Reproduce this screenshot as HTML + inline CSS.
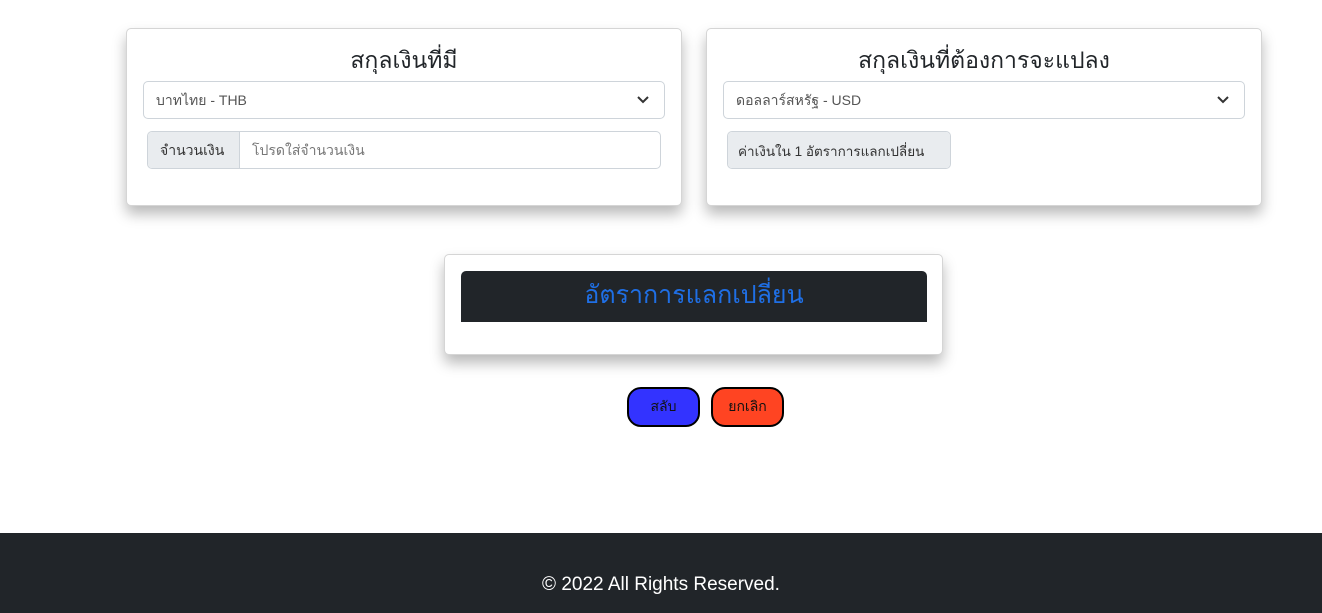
<!DOCTYPE html>
<html><head><meta charset="utf-8"><style>
*{box-sizing:border-box;margin:0;padding:0}
body{width:1322px;height:613px;background:#fff;font-family:"Liberation Sans","DejaVu Sans",sans-serif;color:#212529;position:relative;overflow:hidden}
.card{position:absolute;background:#fff;border:1px solid #d5d5d5;border-radius:5px;box-shadow:0 8px 14px rgba(0,0,0,.28)}
.t{position:absolute;left:0;right:0;text-align:center;font-size:23px}
.sel{position:absolute;height:38px;border:1px solid #ced4da;border-radius:5px;font-size:14px;color:#555;padding:8px 12px;white-space:nowrap}
.sel svg{position:absolute;right:14px;top:13px}
.grp{position:absolute;height:38px;border:1px solid #ced4da;border-radius:5px;font-size:14px;display:flex;overflow:hidden;white-space:nowrap}
.addon{background:#e9ecef;padding:8px 12px;border-right:1px solid #ced4da;color:#333}
.ph{padding:8px 12px;color:#777}
.btn{position:absolute;top:387px;height:40px;border:2px solid #000;border-radius:14px;font-size:14px;text-align:center;line-height:34px;color:#111}
</style></head><body>
<div class="card" style="left:126px;top:28px;width:556px;height:178px">
<div class="t" style="top:14px">สกุลเงินที่มี</div>
<div class="sel" style="left:16px;top:52px;width:522px">บาทไทย - THB<svg width="14" height="10" viewBox="0 0 14 10"><path d="M2 2l5 5 5-5" fill="none" stroke="#333" stroke-width="2"/></svg></div>
<div class="grp" style="left:20px;top:102px;width:514px"><div class="addon" style="width:92px">จำนวนเงิน</div><div class="ph">โปรดใส่จำนวนเงิน</div></div>
</div>
<div class="card" style="left:706px;top:28px;width:556px;height:178px">
<div class="t" style="top:14px">สกุลเงินที่ต้องการจะแปลง</div>
<div class="sel" style="left:16px;top:52px;width:522px">ดอลลาร์สหรัฐ - USD<svg width="14" height="10" viewBox="0 0 14 10"><path d="M2 2l5 5 5-5" fill="none" stroke="#333" stroke-width="2"/></svg></div>
<div class="grp" style="left:20px;top:102px;width:224px"><div class="addon" style="border-right:0;width:100%;padding:8px 10px;font-size:13.5px">ค่าเงินใน 1 อัตราการแลกเปลี่ยน</div></div>
</div>
<div class="card" style="left:444px;top:254px;width:499px;height:101px">
<div style="position:absolute;left:16px;top:16px;width:466px;height:51px;background:#212529;border-radius:5px 5px 0 0;color:#1f6fe5;font-size:25px;text-align:center;line-height:48px">อัตราการแลกเปลี่ยน</div>
</div>
<div class="btn" style="left:627px;width:73px;background:#3333ff">สลับ</div>
<div class="btn" style="left:711px;width:73px;background:#ff4422">ยกเลิก</div>
<div style="position:absolute;left:0;top:533px;width:1322px;height:80px;background:#212529;color:#fff;font-size:19px;text-align:center;padding-top:41px">© 2022 All Rights Reserved.</div>
</body></html>
